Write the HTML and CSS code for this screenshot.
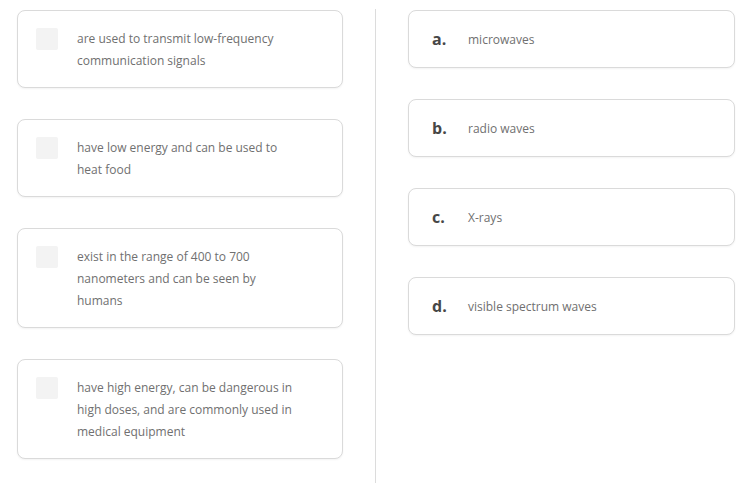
FILE: index.html
```html
<!DOCTYPE html>
<html>
<head>
<meta charset="utf-8">
<link rel="stylesheet" href="styles.css">
</head>
<body>
<div class="page">
  <div class="col left">
    <div class="card prompt"><span class="box"></span><p class="txt">are used to transmit low-frequency communication signals</p></div>
    <div class="card prompt"><span class="box"></span><p class="txt">have low energy and can be used to heat food</p></div>
    <div class="card prompt"><span class="box"></span><p class="txt">exist in the range of 400 to 700 nanometers and can be seen by humans</p></div>
    <div class="card prompt"><span class="box"></span><p class="txt">have high energy, can be dangerous in high doses, and are commonly used in medical equipment</p></div>
  </div>
  <div class="divider"></div>
  <div class="col right">
    <div class="card answer"><span class="letter">a.</span><span class="atxt">microwaves</span></div>
    <div class="card answer"><span class="letter">b.</span><span class="atxt">radio waves</span></div>
    <div class="card answer"><span class="letter">c.</span><span class="atxt">X-rays</span></div>
    <div class="card answer"><span class="letter">d.</span><span class="atxt">visible spectrum waves</span></div>
  </div>
</div>
</body>
</html>
```
FILE: styles.css
```css
html, body {
  margin: 0;
  padding: 0;
  background: #ffffff;
  font-family: "Open Sans", "Noto Sans", sans-serif;
}
.page {
  display: flex;
  padding: 10px 0 0 17px;
  height: 473px;
  box-sizing: content-box;
}
.col {
  display: flex;
  flex-direction: column;
  gap: 31px;
}
.left { width: 326px; }
.right { width: 327px; }
.divider {
  width: 1px;
  background: #dcdcdc;
  margin: -1px 32px 0 32px;
}
.card {
  box-sizing: border-box;
  border: 1px solid #dadada;
  border-radius: 8px;
  background: #fff;
  box-shadow: 0 1px 2px rgba(0,0,0,0.05);
}
.prompt {
  display: flex;
  align-items: flex-start;
  padding: 17px 20px 15px 18px;
}
.box {
  flex: none;
  width: 22px;
  height: 22px;
  background: #f3f3f3;
  border-radius: 2px;
  margin-right: 19px;
}
.txt {
  margin: 0;
  width: 222px;
  font-size: 12px;
  line-height: 22px;
  color: #707070;
}
.answer {
  display: flex;
  align-items: center;
  height: 58px;
  padding: 0 20px 0 23px;
}
.letter {
  width: 36px;
  font-size: 16px;
  font-weight: 700;
  color: #474747;
}
.atxt {
  font-size: 12px;
  color: #707070;
}
```
